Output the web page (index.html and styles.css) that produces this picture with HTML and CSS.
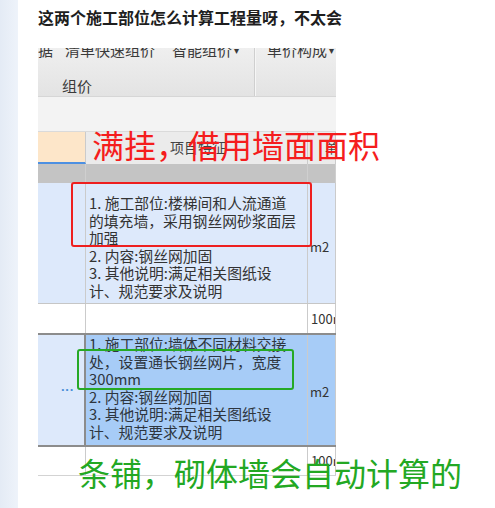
FILE: index.html
```html
<!DOCTYPE html>
<html lang="zh">
<head>
<meta charset="utf-8">
<link rel="stylesheet" href="styles.css">
</head>
<body>
<div class="page">
  <div class="sidebar"></div>
  <div class="main">
    <h1 class="title">这两个施工部位怎么计算工程量呀，不太会</h1>
    <div class="shot">
      <div class="toolbar">
        <div class="tb-left">
          <div class="tb-row1"><span class="tb-a">据</span><span class="tb-b">清单快速组价</span><span class="tb-c">智能组价<span class="caret">▾</span></span></div>
          <div class="tb-row2">组价</div>
        </div>
        <div class="tb-sep"></div>
        <div class="tb-right"><span>单价构成<span class="caret">▾</span></span></div>
      </div>
      <div class="blank"></div>
      <div class="grid">
        <div class="row hdr">
          <div class="c1"></div>
          <div class="c2">项目特征</div>
          <div class="c3">单位</div>
        </div>
        <div class="row band">
          <div class="c1"></div><div class="c2"></div><div class="c3"></div>
        </div>
        <div class="row r1">
          <div class="c1"></div>
          <div class="c2">1. 施工部位:楼梯间和人流通道<br>的填充墙，采用钢丝网砂浆面层<br>加强<br>2. 内容:钢丝网加固<br>3. 其他说明:满足相关图纸设<br>计、规范要求及说明</div>
          <div class="c3">m2</div>
        </div>
        <div class="row r2">
          <div class="c1"></div><div class="c2"></div><div class="c3">100m</div>
        </div>
        <div class="row r3">
          <div class="c1"><span class="dots">···</span></div>
          <div class="c2">1. 施工部位:墙体不同材料交接<br>处，设置通长钢丝网片，宽度<br>300mm<br>2. 内容:钢丝网加固<br>3. 其他说明:满足相关图纸设<br>计、规范要求及说明</div>
          <div class="c3">m2</div>
        </div>
        <div class="row r4">
          <div class="c1"></div><div class="c2"></div><div class="c3">100m</div>
        </div>
      </div>
    </div>
  </div>
  <div class="note note-red">满挂，借用墙面面积</div>
  <div class="box box-red"></div>
  <div class="box box-green"></div>
  <div class="note note-green">条铺，砌体墙会自动计算的</div>
</div>
</body>
</html>
```

FILE: styles.css
```css
html, body {
  margin: 0;
  padding: 0;
  background: #ffffff;
}
body {
  font-family: "Noto Sans CJK SC", "Noto Sans", sans-serif;
  color: #222;
}
.page {
  position: relative;
  display: flex;
  width: 495px;
  height: 508px;
  overflow: hidden;
}
.sidebar {
  width: 18px;
  flex: none;
  background: linear-gradient(to right, #e4ebf5, #eef3fa);
}
.main {
  padding: 7px 0 0 20px;
}
.title {
  margin: 0;
  font-size: 16px;
  line-height: 20px;
  height: 20px;
  font-weight: bold;
  color: #1e1e1e;
  white-space: nowrap;
}
.shot {
  margin-top: 21px;
  width: 298px;
  overflow: hidden;
  color: #333;
}
.toolbar {
  display: flex;
  height: 48px;
  background: linear-gradient(#efefef, #e3e3e3);
  border-bottom: 1px solid #d6d6d6;
  overflow: hidden;
  font-size: 15px;
  color: #3a3a3a;
}
.tb-left {
  width: 216px;
  flex: none;
}
.tb-row1 {
  display: flex;
  margin-top: -8px;
  height: 20px;
  line-height: 20px;
  white-space: nowrap;
}
.tb-a { width: 27px; }
.tb-b { width: 107px; }
.caret { font-size: 10px; margin-left: 2px; vertical-align: 2px; }
.tb-row2 {
  margin-top: 16px;
  padding-left: 24px;
  line-height: 20px;
}
.tb-sep {
  width: 1px;
  flex: none;
  background: #cfcfcf;
  box-shadow: 1px 0 0 #f6f6f6;
}
.tb-right {
  padding-left: 12px;
  margin-top: -8px;
  line-height: 20px;
  white-space: nowrap;
}
.blank {
  height: 34px;
  background: #f3f3f3;
}
.grid {
  display: flex;
  flex-direction: column;
  font-size: 14.8px;
  line-height: 17.6px;
}
.row {
  display: grid;
  grid-template-columns: 48px 222px 28px;
}
.row > div {
  box-sizing: border-box;
  border-right: 1px solid #cbcbcb;
  white-space: nowrap;
  overflow: hidden;
}
.hdr {
  height: 32px;
  background: #ebebeb;
  border-top: 1px solid #dadada;
}
.hdr .c1 {
  background: #fde6c9;
  border-bottom: 2px solid #4d90e2;
}
.hdr .c2 {
  display: flex;
  align-items: center;
  justify-content: center;
  font-size: 14px;
  color: #444;
}
.hdr .c3 {
  display: flex;
  align-items: center;
  padding-left: 17px;
  font-size: 13px;
  color: #444;
}
.band {
  height: 19px;
  background: #c4c4c4;
}
.band > div { border-right-color: #cfcfcf; }
.r1 {
  height: 120px;
  background: #dde9fb;
  border-bottom: 1px solid #c6c6c6;
}
.c2 {
  padding-left: 3px;
}
.r1 .c2 { padding-top: 11px; }
.c3 {
  font-size: 13px;
  padding-left: 2px;
}
.r1 .c3, .r3 .c3 {
  display: flex;
  align-items: center;
}
.r1 .c3 { padding-top: 8px; }
.r2, .r4 {
  height: 29px;
  background: #fff;
}
.r2 .c3, .r4 .c3 {
  display: flex;
  align-items: center;
  padding-left: 3px;
}
.r2 {
  border-bottom: 2px solid #8c8c8c;
}
.r3 {
  height: 110px;
  background: #a7ccf7;
  border-bottom: 2px solid #8c8c8c;
}
.r3 .c1 {
  background: #dde9fb;
  border-right: 2px solid #8c8c8c;
  display: flex;
  align-items: center;
  justify-content: flex-end;
  padding-right: 10px;
}
.r3 .c2 {
  color: #2e3640;
}
.r3 .c3 { padding-top: 4px; }
.dots {
  font-family: "Liberation Sans", sans-serif;
  color: #4a8fd8;
  font-size: 13px;
  font-weight: bold;
}
.r4 {
  height: 28px;
  border-bottom: 1px solid #d3d3d3;
}
.r4 .c3 { align-items: flex-start; padding-top: 5px; }

.note {
  position: absolute;
  font-size: 32px;
  line-height: 32px;
  white-space: nowrap;
}
.note-red {
  left: 92px;
  top: 128px;
  color: #f51d1d;
}
.note-green {
  left: 78px;
  top: 456px;
  color: #23a823;
}
.box {
  position: absolute;
  box-sizing: border-box;
  border-radius: 3px;
}
.box-red {
  left: 71px;
  top: 182px;
  width: 241px;
  height: 65px;
  border: 2px solid #ee1f1f;
}
.box-green {
  left: 77px;
  top: 349px;
  width: 217px;
  height: 41px;
  border: 2px solid #25a925;
}
```
